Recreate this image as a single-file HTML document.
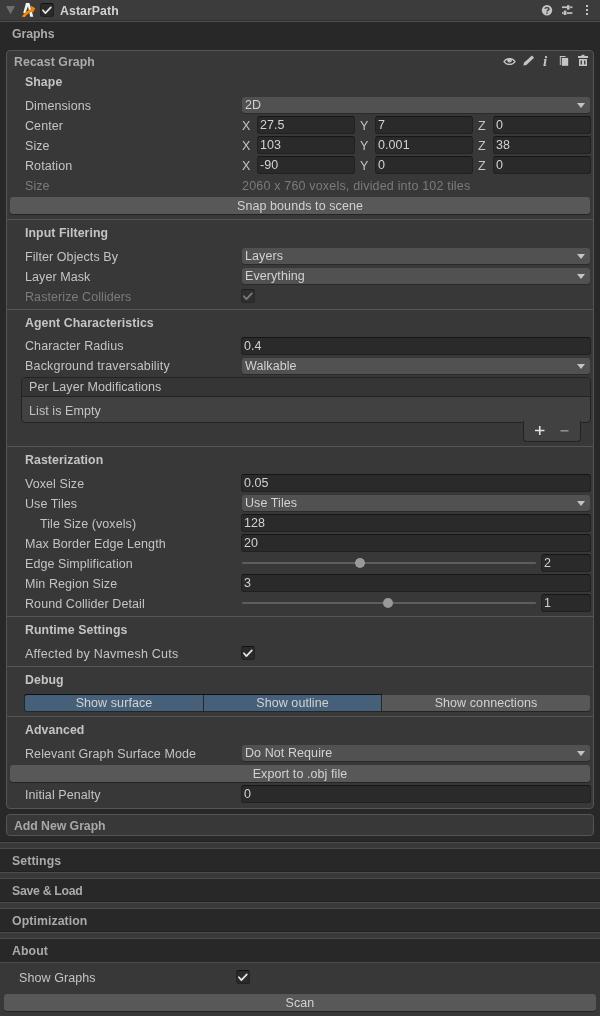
<!DOCTYPE html><html><head><meta charset="utf-8"><style>
html,body{margin:0;padding:0}
body{width:600px;height:1016px;position:relative;overflow:hidden;background:#282828;font-family:"Liberation Sans",sans-serif}
.t{position:absolute;white-space:nowrap;will-change:transform;letter-spacing:0.08px;font-size:12.5px;line-height:15px}
.l{color:#c4c4c4}
.v{color:#d2d2d2}
.d{color:#7b7b7b}
.b{font-weight:bold;font-size:12.3px;color:#c4c4c4}
.fld{position:absolute;box-sizing:border-box;background:#2a2a2a;border:1px solid #212121;border-top-color:#161616;border-radius:3px}
.pop{position:absolute;box-sizing:border-box;background:#515151;border-radius:3px;box-shadow:0 1px 0 #2a2a2a}
.btn{position:absolute;box-sizing:border-box;background:#585858;border-radius:3px;box-shadow:0 1px 0 #242424}
.arr{position:absolute;width:0;height:0;border-left:4px solid transparent;border-right:4px solid transparent;border-top:5px solid #c4c4c4}
.chk{position:absolute;box-sizing:border-box;width:13px;height:13px;background:#2a2a2a;border:1px solid #212121;border-top-color:#101010;border-radius:3px}
</style></head><body>
<div style="position:absolute;left:0px;top:0px;width:600px;height:20px;background:#3c3c3c"></div>
<div style="position:absolute;left:0px;top:20px;width:600px;height:1px;background:#303030"></div>
<div style="position:absolute;left:0px;top:21px;width:600px;height:1px;background:#4d4d4d"></div>
<svg style="position:absolute;left:5px;top:5px" width="11" height="10"><path d="M1 1 L10 1 L5.5 9.3 Z" fill="#6f6f6f"/></svg>
<svg style="position:absolute;left:19px;top:1px" width="20" height="18" viewBox="19 1 20 18">
<path d="M26 3 L29.4 3 L33.3 16.8 L30.2 16.8 L28 6.3 L25.4 13 L23.2 13 Z" fill="#f4f4f4"/>
<path d="M21.8 16.8 C23.8 13 27.3 10.2 31.3 8.9 L31 5.8 L35.3 8.3 L32.8 12.9 L32.4 11.8 C29 12.7 26.6 14.6 25 16.9 Z" fill="#f28b00"/>
</svg>
<div class="chk" style="left:40px;top:3px;width:14px;height:14px;"></div>
<svg style="position:absolute;left:40px;top:3px" width="14" height="14"><path d="M2.9 7.2 L5.4 10.1 L10.8 4.4" fill="none" stroke="#e6e6e6" stroke-width="1.7" stroke-linecap="round" stroke-linejoin="round"/></svg>
<div class="t b" style="left:60px;top:4px;color:#d2d2d2">AstarPath</div>
<svg style="position:absolute;left:540px;top:4px" width="14" height="13"><circle cx="7" cy="6.2" r="5.2" fill="#c4c4c4"/>
<path d="M5 4.8 C5 3.2 9 3.2 9 4.9 C9 6.1 7 6.1 7 7.4" fill="none" stroke="#3c3c3c" stroke-width="1.4"/><circle cx="7" cy="9.1" r="0.8" fill="#3c3c3c"/></svg>
<svg style="position:absolute;left:560px;top:4px" width="14" height="12" fill="#c4c4c4">
<rect x="2" y="2.4" width="5" height="1.7"/><rect x="7" y="1.2" width="2.6" height="4.4"/><rect x="10.2" y="2.4" width="2.2" height="1.7"/>
<rect x="2" y="8.2" width="1.6" height="1.7"/><rect x="3.8" y="6.6" width="2.6" height="4.4"/><rect x="7" y="8.2" width="5.4" height="1.7"/></svg>
<svg style="position:absolute;left:584px;top:4px" width="6" height="13" fill="#c4c4c4">
<rect x="2" y="1" width="2" height="2"/><rect x="2" y="5" width="2" height="2"/><rect x="2" y="9" width="2" height="2"/></svg>
<div class="t b" style="left:12px;top:27px;color:#aaaaaa;letter-spacing:-0.1px">Graphs</div>
<div style="position:absolute;left:6px;top:50px;width:588px;height:759px;box-sizing:border-box;background:#383838;border:1px solid #555555;border-radius:4px"></div>
<div class="t b" style="left:14px;top:55px;color:#aaaaaa">Recast Graph</div>
<svg style="position:absolute;left:502px;top:54px" width="90" height="14" fill="#c4c4c4">
<path d="M2 7.6 C4.5 3.6 10.5 3.6 13 7.6 C10.5 11.4 4.5 11.4 2 7.6 Z" fill="none" stroke="#c4c4c4" stroke-width="1.3"/>
<circle cx="7.5" cy="6.3" r="2.3"/>
<path d="M21.2 11.6 L24.35 10.89 L32.08 3.78 L29.92 1.42 L22.19 8.53 Z"/>
<path d="M57.8 2 L63.5 2 L63.5 3 L58.8 3 L58.8 11 L57.8 11 Z"/><rect x="59.8" y="3.9" width="6.4" height="7.9"/>
<rect x="76" y="2" width="10" height="2"/><rect x="79.5" y="0.8" width="3" height="1.5"/>
<path d="M77 5 L85 5 L85 12 L77 12 Z M78.6 6.5 L78.6 10.5 L79.9 10.5 L79.9 6.5 Z M82.1 6.5 L82.1 10.5 L83.4 10.5 L83.4 6.5 Z" fill-rule="evenodd"/>
</svg>
<div style="position:absolute;left:543px;top:54px;font:italic bold 15px/15px 'Liberation Serif';color:#c4c4c4;will-change:transform">i</div>
<div class="t b" style="left:25px;top:75px;">Shape</div>
<div class="t l" style="left:25px;top:99px;">Dimensions</div>
<div class="pop" style="left:242px;top:97px;width:348px;height:16px"></div>
<div class="arr" style="left:577px;top:103px"></div>
<div class="t v" style="left:245px;top:98px;">2D</div>
<div class="t l" style="left:25px;top:119px;">Center</div>
<div class="t l" style="left:242px;top:119px;">X</div>
<div class="fld" style="left:257px;top:116px;width:98px;height:18px"></div>
<div class="t v" style="left:260px;top:118px;">27.5</div>
<div class="t l" style="left:360px;top:119px;">Y</div>
<div class="fld" style="left:375px;top:116px;width:98px;height:18px"></div>
<div class="t v" style="left:378px;top:118px;">7</div>
<div class="t l" style="left:478px;top:119px;">Z</div>
<div class="fld" style="left:493px;top:116px;width:98px;height:18px"></div>
<div class="t v" style="left:496px;top:118px;">0</div>
<div class="t l" style="left:25px;top:139px;">Size</div>
<div class="t l" style="left:242px;top:139px;">X</div>
<div class="fld" style="left:257px;top:136px;width:98px;height:18px"></div>
<div class="t v" style="left:260px;top:138px;">103</div>
<div class="t l" style="left:360px;top:139px;">Y</div>
<div class="fld" style="left:375px;top:136px;width:98px;height:18px"></div>
<div class="t v" style="left:378px;top:138px;">0.001</div>
<div class="t l" style="left:478px;top:139px;">Z</div>
<div class="fld" style="left:493px;top:136px;width:98px;height:18px"></div>
<div class="t v" style="left:496px;top:138px;">38</div>
<div class="t l" style="left:25px;top:159px;">Rotation</div>
<div class="t l" style="left:242px;top:159px;">X</div>
<div class="fld" style="left:257px;top:156px;width:98px;height:18px"></div>
<div class="t v" style="left:260px;top:158px;">-90</div>
<div class="t l" style="left:360px;top:159px;">Y</div>
<div class="fld" style="left:375px;top:156px;width:98px;height:18px"></div>
<div class="t v" style="left:378px;top:158px;">0</div>
<div class="t l" style="left:478px;top:159px;">Z</div>
<div class="fld" style="left:493px;top:156px;width:98px;height:18px"></div>
<div class="t v" style="left:496px;top:158px;">0</div>
<div class="t d" style="left:25px;top:179px;">Size</div>
<div class="t d" style="left:242px;top:179px;letter-spacing:0.18px">2060 x 760 voxels, divided into 102 tiles</div>
<div class="btn" style="left:10px;top:197px;width:580px;height:17px"></div>
<div class="t v" style="left:10px;top:199px;width:580px;text-align:center">Snap bounds to scene</div>
<div style="position:absolute;left:7px;top:219px;width:586px;height:1px;background:#555555"></div>
<div class="t b" style="left:25px;top:226px;">Input Filtering</div>
<div class="t l" style="left:25px;top:250px;">Filter Objects By</div>
<div class="pop" style="left:242px;top:248px;width:348px;height:16px"></div>
<div class="arr" style="left:577px;top:254px"></div>
<div class="t v" style="left:245px;top:249px;">Layers</div>
<div class="t l" style="left:25px;top:270px;">Layer Mask</div>
<div class="pop" style="left:242px;top:268px;width:348px;height:16px"></div>
<div class="arr" style="left:577px;top:274px"></div>
<div class="t v" style="left:245px;top:269px;">Everything</div>
<div class="t d" style="left:25px;top:290px;">Rasterize Colliders</div>
<div class="chk" style="left:241px;top:289px;width:14px;height:14px;background:#2f2f2f;border-color:#282828;border-top-color:#1c1c1c;"></div>
<svg style="position:absolute;left:241px;top:289px" width="14" height="14"><path d="M2.9 7.2 L5.4 10.1 L10.8 4.4" fill="none" stroke="#7f7f7f" stroke-width="1.7" stroke-linecap="round" stroke-linejoin="round"/></svg>
<div style="position:absolute;left:7px;top:309px;width:586px;height:1px;background:#555555"></div>
<div class="t b" style="left:25px;top:316px;">Agent Characteristics</div>
<div class="t l" style="left:25px;top:339px;">Character Radius</div>
<div class="fld" style="left:241px;top:337px;width:350px;height:18px"></div>
<div class="t v" style="left:244px;top:339px;">0.4</div>
<div class="t l" style="left:25px;top:359px;letter-spacing:0.18px">Background traversability</div>
<div class="pop" style="left:242px;top:358px;width:348px;height:16px"></div>
<div class="arr" style="left:577px;top:364px"></div>
<div class="t v" style="left:245px;top:359px;">Walkable</div>
<div style="position:absolute;left:21px;top:377px;width:570px;height:46px;box-sizing:border-box;background:#414141;border:1px solid #232323;border-radius:4px"></div>
<div style="position:absolute;left:22px;top:378px;width:568px;height:18px;background:#353535;border-bottom:1px solid #232323;border-radius:3px 3px 0 0"></div>
<div style="position:absolute;left:523px;top:421px;width:58px;height:21px;box-sizing:border-box;background:#414141;border:1px solid #232323;border-top:none;border-radius:0 0 4px 4px"></div>
<div class="t l" style="left:29px;top:380px;">Per Layer Modifications</div>
<div class="t l" style="left:29px;top:404px;">List is Empty</div>
<svg style="position:absolute;left:530px;top:424px" width="45" height="14">
<path d="M5 6.5 H14.5 M9.75 2 V11" stroke="#e0e0e0" stroke-width="1.6"/>
<path d="M30.5 6.8 H38.5" stroke="#8e8e8e" stroke-width="1.6"/></svg>
<div style="position:absolute;left:7px;top:446px;width:586px;height:1px;background:#555555"></div>
<div class="t b" style="left:25px;top:453px;">Rasterization</div>
<div class="t l" style="left:25px;top:477px;">Voxel Size</div>
<div class="fld" style="left:241px;top:474px;width:350px;height:18px"></div>
<div class="t v" style="left:244px;top:476px;">0.05</div>
<div class="t l" style="left:25px;top:497px;">Use Tiles</div>
<div class="pop" style="left:242px;top:495px;width:348px;height:16px"></div>
<div class="arr" style="left:577px;top:501px"></div>
<div class="t v" style="left:245px;top:496px;">Use Tiles</div>
<div class="t l" style="left:40px;top:517px;">Tile Size (voxels)</div>
<div class="fld" style="left:241px;top:514px;width:350px;height:18px"></div>
<div class="t v" style="left:244px;top:516px;">128</div>
<div class="t l" style="left:25px;top:537px;">Max Border Edge Length</div>
<div class="fld" style="left:241px;top:534px;width:350px;height:18px"></div>
<div class="t v" style="left:244px;top:536px;">20</div>
<div class="t l" style="left:25px;top:557px;">Edge Simplification</div>
<div style="position:absolute;left:242px;top:562px;width:294px;height:2px;background:#5e5e5e;border-radius:1px"></div>
<div style="position:absolute;left:355px;top:558px;width:10px;height:10px;border-radius:50%;background:#999999"></div>
<div class="fld" style="left:541px;top:554px;width:50px;height:18px"></div>
<div class="t v" style="left:544px;top:556px;">2</div>
<div class="t l" style="left:25px;top:577px;">Min Region Size</div>
<div class="fld" style="left:241px;top:574px;width:350px;height:18px"></div>
<div class="t v" style="left:244px;top:576px;">3</div>
<div class="t l" style="left:25px;top:597px;">Round Collider Detail</div>
<div style="position:absolute;left:242px;top:602px;width:294px;height:2px;background:#5e5e5e;border-radius:1px"></div>
<div style="position:absolute;left:383px;top:598px;width:10px;height:10px;border-radius:50%;background:#999999"></div>
<div class="fld" style="left:541px;top:594px;width:50px;height:18px"></div>
<div class="t v" style="left:544px;top:596px;">1</div>
<div style="position:absolute;left:7px;top:616px;width:586px;height:1px;background:#555555"></div>
<div class="t b" style="left:25px;top:623px;">Runtime Settings</div>
<div class="t l" style="left:25px;top:647px;letter-spacing:0.24px">Affected by Navmesh Cuts</div>
<div class="chk" style="left:241px;top:646px;width:14px;height:14px;"></div>
<svg style="position:absolute;left:241px;top:646px" width="14" height="14"><path d="M2.9 7.2 L5.4 10.1 L10.8 4.4" fill="none" stroke="#e6e6e6" stroke-width="1.7" stroke-linecap="round" stroke-linejoin="round"/></svg>
<div style="position:absolute;left:7px;top:666px;width:586px;height:1px;background:#555555"></div>
<div class="t b" style="left:25px;top:673px;">Debug</div>
<div style="position:absolute;left:24px;top:694px;width:358px;height:18px;box-sizing:border-box;background:#262626;border-top:1px solid #101010;border-radius:3px 0 0 3px"></div>
<div style="position:absolute;left:25px;top:695px;width:178px;height:16px;background:#46607a;border-radius:2px 0 0 2px"></div>
<div style="position:absolute;left:204px;top:695px;width:177px;height:16px;background:#46607a"></div>
<div style="position:absolute;left:382px;top:695px;width:208px;height:16px;background:#585858;border-radius:0 3px 3px 0;box-shadow:0 1px 0 #242424"></div>
<div class="t v" style="left:25px;top:696px;width:178px;text-align:center">Show surface</div>
<div class="t v" style="left:204px;top:696px;width:177px;text-align:center">Show outline</div>
<div class="t v" style="left:382px;top:696px;width:208px;text-align:center">Show connections</div>
<div style="position:absolute;left:7px;top:716px;width:586px;height:1px;background:#555555"></div>
<div class="t b" style="left:25px;top:723px;">Advanced</div>
<div class="t l" style="left:25px;top:747px;">Relevant Graph Surface Mode</div>
<div class="pop" style="left:242px;top:745px;width:348px;height:16px"></div>
<div class="arr" style="left:577px;top:751px"></div>
<div class="t v" style="left:245px;top:746px;">Do Not Require</div>
<div class="btn" style="left:10px;top:765px;width:580px;height:17px"></div>
<div class="t v" style="left:10px;top:767px;width:580px;text-align:center">Export to .obj file</div>
<div class="t l" style="left:25px;top:788px;">Initial Penalty</div>
<div class="fld" style="left:241px;top:785px;width:350px;height:18px"></div>
<div class="t v" style="left:244px;top:787px;">0</div>
<div style="position:absolute;left:6px;top:814px;width:588px;height:22px;box-sizing:border-box;background:#383838;border:1px solid #555555;border-radius:4px"></div>
<div class="t b" style="left:14px;top:819px;color:#a8a8a8;letter-spacing:-0.05px">Add New Graph</div>
<div style="position:absolute;left:0px;top:841px;width:600px;height:1px;background:#222222"></div>
<div style="position:absolute;left:0px;top:842px;width:600px;height:1px;background:#4b4b4b"></div>
<div style="position:absolute;left:0px;top:843px;width:600px;height:5px;background:#393939"></div>
<div style="position:absolute;left:0px;top:848px;width:600px;height:1px;background:#4b4b4b"></div>
<div class="t b" style="left:12px;top:854px;color:#aaaaaa">Settings</div>
<div style="position:absolute;left:0px;top:871px;width:600px;height:1px;background:#222222"></div>
<div style="position:absolute;left:0px;top:872px;width:600px;height:1px;background:#4b4b4b"></div>
<div style="position:absolute;left:0px;top:873px;width:600px;height:5px;background:#393939"></div>
<div style="position:absolute;left:0px;top:878px;width:600px;height:1px;background:#4b4b4b"></div>
<div class="t b" style="left:12px;top:884px;color:#aaaaaa;letter-spacing:-0.3px">Save &amp; Load</div>
<div style="position:absolute;left:0px;top:901px;width:600px;height:1px;background:#222222"></div>
<div style="position:absolute;left:0px;top:902px;width:600px;height:1px;background:#4b4b4b"></div>
<div style="position:absolute;left:0px;top:903px;width:600px;height:5px;background:#393939"></div>
<div style="position:absolute;left:0px;top:908px;width:600px;height:1px;background:#4b4b4b"></div>
<div class="t b" style="left:12px;top:914px;color:#aaaaaa">Optimization</div>
<div style="position:absolute;left:0px;top:931px;width:600px;height:1px;background:#222222"></div>
<div style="position:absolute;left:0px;top:932px;width:600px;height:1px;background:#4b4b4b"></div>
<div style="position:absolute;left:0px;top:933px;width:600px;height:5px;background:#393939"></div>
<div style="position:absolute;left:0px;top:938px;width:600px;height:1px;background:#4b4b4b"></div>
<div class="t b" style="left:12px;top:944px;color:#aaaaaa">About</div>
<div style="position:absolute;left:0px;top:962px;width:600px;height:1px;background:#4b4b4b"></div>
<div style="position:absolute;left:0px;top:963px;width:600px;height:53px;background:#383838"></div>
<div class="t l" style="left:19px;top:971px;">Show Graphs</div>
<div class="chk" style="left:236px;top:970px;width:14px;height:14px;"></div>
<svg style="position:absolute;left:236px;top:970px" width="14" height="14"><path d="M2.9 7.2 L5.4 10.1 L10.8 4.4" fill="none" stroke="#e6e6e6" stroke-width="1.7" stroke-linecap="round" stroke-linejoin="round"/></svg>
<div class="btn" style="left:4px;top:994px;width:592px;height:17px"></div>
<div class="t v" style="left:4px;top:996px;width:592px;text-align:center">Scan</div>
</body></html>
